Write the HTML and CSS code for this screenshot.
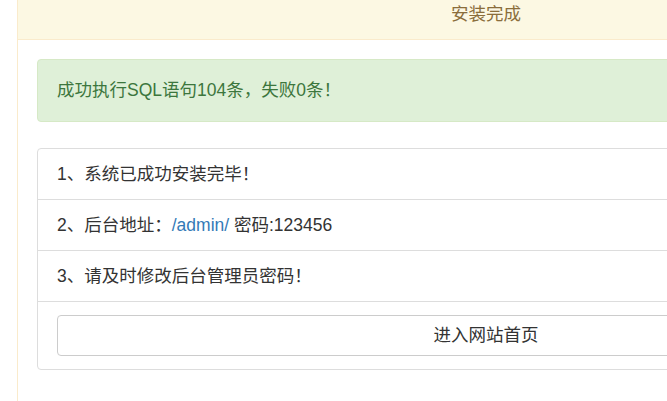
FILE: index.html
```html
<!DOCTYPE html>
<html lang="zh-CN">
<head>
    <meta charset="UTF-8">
    <meta name="viewport" content="width=device-width, initial-scale=1.0">
    <title>安装完成</title>
    <link rel="stylesheet" href="styles.css">
</head>
<body>
    <div class="page">
        <div class="panel">
            <div class="panel-heading">安装完成</div>
            <div class="panel-body">
                <div class="alert">成功执行SQL语句104条，失败0条！</div>
                <ul class="list-group">
                    <li class="list-group-item">1、系统已成功安装完毕！</li>
                    <li class="list-group-item">2、后台地址：<a href="/admin/">/admin/</a> 密码:123456</li>
                    <li class="list-group-item">3、请及时修改后台管理员密码！</li>
                    <li class="list-group-item">
                        <a class="btn" href="/">进入网站首页</a>
                    </li>
                </ul>
            </div>
        </div>
    </div>
</body>
</html>
```

FILE: styles.css
```css
html, body {
    overflow: hidden;
}
body {
    margin: 0;
    font-family: "Liberation Sans", "Noto Sans CJK SC", sans-serif;
    font-size: 17.5px;
    line-height: 24px;
    color: #333;
    background-color: #fff;
}
.page {
    padding-left: 17px;
}
.panel {
    width: 938px;
    box-sizing: border-box;
    border: 1px solid #faebcc;
    border-top: none;
    border-bottom: none;
    min-height: 420px;
}
.panel-heading {
    padding: 2px 15px 13px;
    text-align: center;
    color: #8a6d3b;
    background-color: #fcf8e3;
    border-bottom: 1px solid #faebcc;
}
.panel-body {
    padding: 19px 19px;
}
.alert {
    padding: 18px 19px 19px;
    margin-bottom: 26px;
    color: #3c763d;
    background-color: #dff0d8;
    border: 1px solid #d6e9c6;
    border-radius: 4px;
}
.list-group {
    list-style: none;
    margin: 0;
    padding: 0;
}
.list-group-item {
    padding: 13px 19px;
    margin-bottom: -1px;
    border: 1px solid #ddd;
}
.list-group-item:first-child {
    border-top-left-radius: 4px;
    border-top-right-radius: 4px;
}
.list-group-item:last-child {
    margin-bottom: 0;
    border-bottom-left-radius: 4px;
    border-bottom-right-radius: 4px;
}
a {
    color: #337ab7;
    text-decoration: none;
}
.btn {
    display: block;
    padding: 7px 12px 8px;
    text-align: center;
    color: #333;
    background-color: #fff;
    border: 1px solid #ccc;
    border-radius: 4px;
}
```
